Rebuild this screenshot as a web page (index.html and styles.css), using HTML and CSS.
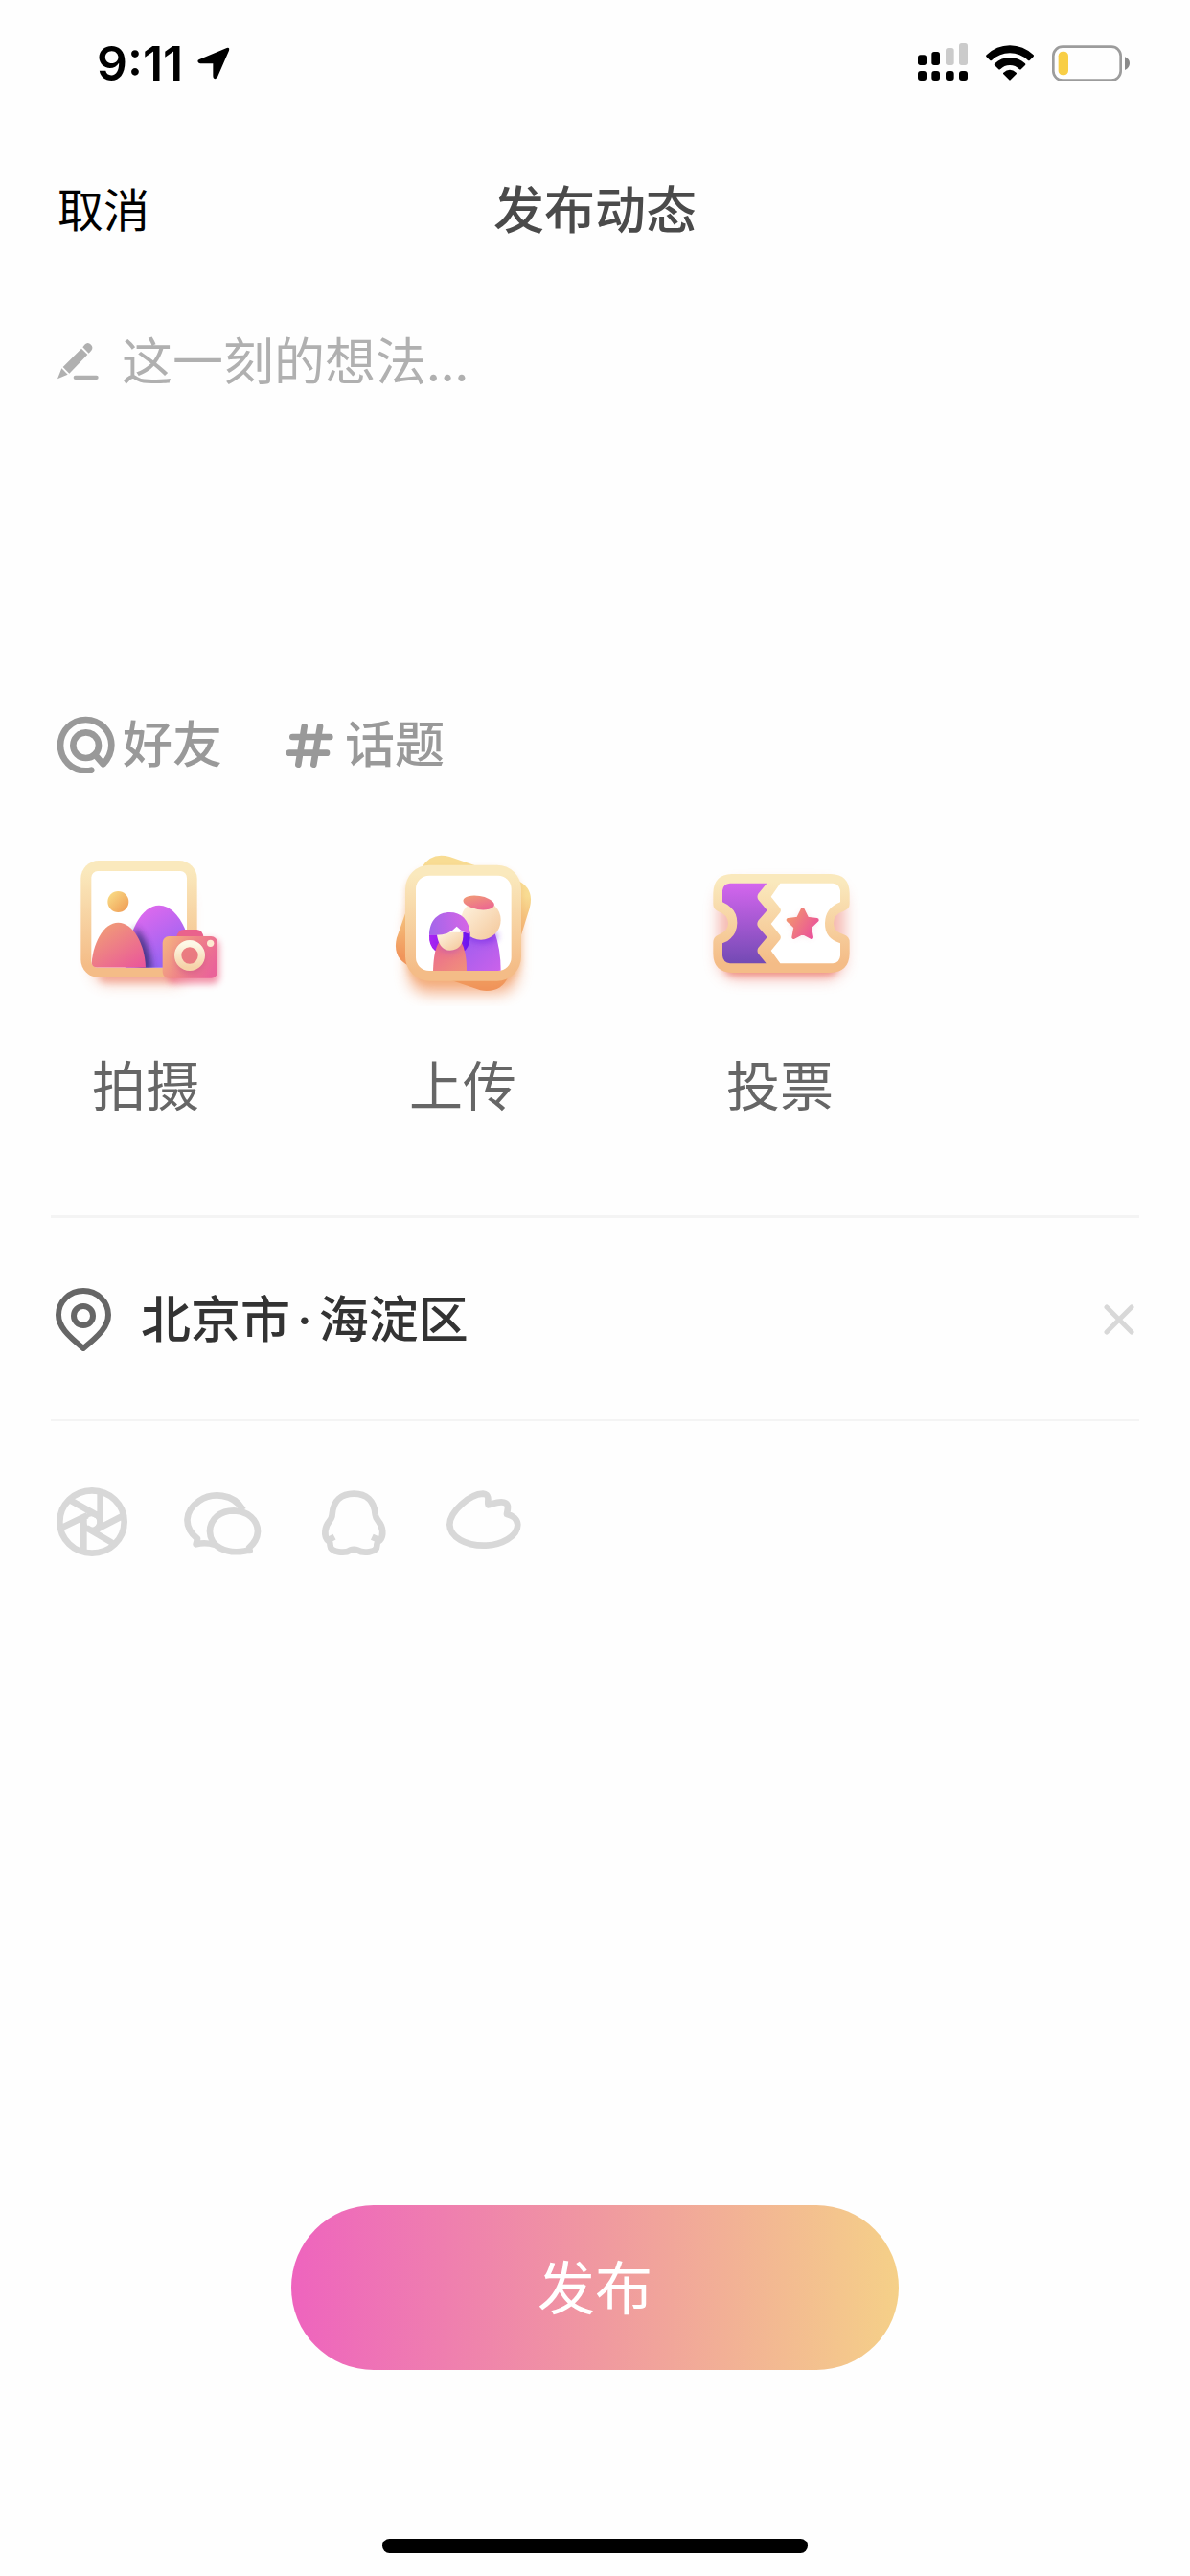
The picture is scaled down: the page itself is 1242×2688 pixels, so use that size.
FILE: index.html
```html
<!DOCTYPE html>
<html lang="zh-CN">
<head>
<meta charset="utf-8">
<meta name="viewport" content="width=device-width, initial-scale=1">
<title>发布动态</title>
<link rel="stylesheet" href="styles.css">
</head>
<body>
<div class="page">
  <div class="status">
    <span class="status-time">9:11</span>
    <svg class="status-arrow" viewBox="500 75 102 126" aria-hidden="true"><path d="M506 126 592 90Q602 87 599 98L563 181Q559 188 553 186 549 184 549 178V139H509Q502 138 501 132 501 128 506 126Z"/></svg>
    <div class="status-icons">
      <svg class="signal" viewBox="174 75 156 126" aria-hidden="true">
        <g fill="#000"><rect x="174" y="112" width="27" height="32" rx="8"/><rect x="217" y="102" width="26" height="42" rx="8"/><rect x="174" y="162" width="27" height="30" rx="9"/><rect x="217" y="162" width="26" height="30" rx="9"/><rect x="261" y="162" width="26" height="30" rx="9"/><rect x="303" y="162" width="27" height="30" rx="9"/></g>
        <g fill="#cbcbcb"><rect x="261" y="90" width="26" height="54" rx="8"/><rect x="303" y="75" width="27" height="69" rx="8"/></g>
      </svg>
      <svg class="wifi" viewBox="387 75 150 126" aria-hidden="true"><path d="M389 112Q420 82 462 82T536 112Q538 114 536 117L524 129Q522 131 519 129 494 106 462 106T405 129Q402 131 400 129L388 117Q386 114 389 112ZM415 139Q435 120 462 120T510 139Q512 142 510 144L497 157Q495 158 492 157 480 144 462 144T432 157Q429 158 427 157L414 144Q412 142 415 139ZM442 167Q462 150 482 167 484 169 482 172L464 190Q462 192 460 190L442 172Q440 169 442 167Z"/></svg>
      <svg class="battery" viewBox="594 75 243 126" aria-hidden="true"><rect x="598" y="86" width="211" height="105" rx="29" fill="none" stroke="#9c9c9c" stroke-width="8"/><rect x="614" y="101" width="31" height="74" rx="14" fill="#f8ce46"/><path d="M822 118Q837 124 837 138T822 159Z" fill="#8a8a8a"/></svg>
    </div>
  </div>

  <header class="header">
    <button class="cancel" type="button">取消</button>
    <h1 class="title">发布动态</h1>
  </header>

  <main class="main">
    <div class="editor">
      <svg class="pencil" viewBox="60 42 129 180" aria-hidden="true"><path d="M135 101 154 120 97 179 77 159ZM139 97 145 89Q155 79 165 89 173 98 166 107L158 116ZM73 163 92 182 60 196Z"/><rect x="110" y="185" width="78" height="13" rx="6"/></svg>
      <textarea class="thought" aria-label="这一刻的想法" placeholder="这一刻的想法..."></textarea>
    </div>

    <div class="tags">
      <button class="tag tag-friend" type="button">
        <svg class="tag-icon at" viewBox="60 63 180 198" aria-hidden="true"><circle cx="149" cy="173" r="40"/><path d="M177 202 203 232Q229 206 229 172A80 80 0 1 0 149 253Q158 253 166 251" stroke-linecap="round" stroke-linejoin="round"/></svg>
        好友
      </button>
      <button class="tag tag-topic" type="button">
        <svg class="tag-icon hash" viewBox="774 63 150 198" aria-hidden="true"><path d="M796 147H913M786 197H903M833 115 814 233M882 115 862 233" stroke-linecap="round"/></svg>
        话题
      </button>
    </div>

    <div class="tools">
      <button class="tool" type="button">
        <svg class="tool-icon" viewBox="-9 0 570 540" aria-hidden="true">
          <defs>
            <linearGradient id="frame" x1="0" y1="0" x2="0" y2="1"><stop offset=".08" stop-color="#fae9bd"/><stop offset=".9" stop-color="#f4bc87"/></linearGradient>
            <linearGradient id="sun" x1="0" y1="0" x2="1" y2="1"><stop stop-color="#fae28a"/><stop offset="1" stop-color="#ef9852"/></linearGradient>
            <linearGradient id="hill" x1=".1" y1="0" x2=".9" y2="1"><stop stop-color="#f1a274"/><stop offset="1" stop-color="#ea579a"/></linearGradient>
            <linearGradient id="violet" x1=".2" y1="0" x2=".8" y2="1"><stop stop-color="#e46aed"/><stop offset="1" stop-color="#8562f4"/></linearGradient>
            <linearGradient id="cam" x1="0" y1=".2" x2="1" y2=".6"><stop stop-color="#f4b181"/><stop offset=".5" stop-color="#ef8488"/><stop offset="1" stop-color="#ea6399"/></linearGradient>
            <linearGradient id="ring" x1="0" y1="0" x2="0" y2="1"><stop stop-color="#fdf8e7"/><stop offset="1" stop-color="#f6d3a8"/></linearGradient>
            <filter id="soft" x="-40%" y="-40%" width="180%" height="180%"><feGaussianBlur stdDeviation="22"/></filter>
            <filter id="softer" x="-40%" y="-60%" width="180%" height="220%"><feGaussianBlur stdDeviation="11"/></filter>
            <clipPath id="photo"><rect x="106" y="117" width="299" height="302" rx="18"/></clipPath>
          </defs>
          <rect x="110" y="170" width="300" height="300" rx="50" fill="#ee8460" opacity=".45" filter="url(#soft)"/>
          <rect x="130" y="420" width="240" height="46" rx="20" fill="#ee8a76" opacity=".55" filter="url(#softer)"/>
          <rect x="346" y="330" width="160" height="140" rx="20" fill="#ec5d7e" opacity=".65" filter="url(#softer)"/>
          <rect x="73" y="84" width="364" height="366" rx="56" fill="url(#frame)"/>
          <rect x="106" y="117" width="299" height="302" rx="20" fill="#fff"/>
          <g clip-path="url(#photo)">
            <path d="M212 430C216 310 262 224 318 224S422 310 426 430Z" fill="url(#violet)"/>
            <path d="M240 290Q290 330 296 430H255Z" fill="#312a70" opacity=".8" filter="url(#softer)"/>
            <path d="M106 419C108 344 144 278 190 278S274 344 276 419Z" fill="url(#hill)"/>
          </g>
          <circle cx="190" cy="213" r="33" fill="url(#sun)"/>
          <path d="M372 326Q376 300 398 300H436Q455 301 458 326Z" fill="#ea628c"/>
          <rect x="329" y="321" width="172" height="131" rx="20" fill="url(#cam)"/>
          <circle cx="416" cy="394" r="44" fill="#bd4784" opacity=".45" filter="url(#softer)"/>
          <circle cx="414" cy="381" r="37" fill="#ed8080" fill-opacity=".8" stroke="url(#ring)" stroke-width="22"/>
          <circle cx="479" cy="343" r="11" fill="#fdebd2"/>
        </svg>
        拍摄
      </button>
      <button class="tool" type="button">
        <svg class="tool-icon" viewBox="-6 0 570 540" aria-hidden="true">
          <defs>
            <linearGradient id="back" x1="0" y1="0" x2="0" y2="1"><stop offset=".3" stop-color="#f8dc93"/><stop offset=".75" stop-color="#f0935a"/></linearGradient>
            <linearGradient id="hair" x1="0" y1=".5" x2="1" y2=".4"><stop stop-color="#a366ea"/><stop offset="1" stop-color="#d765e6"/></linearGradient>
            <linearGradient id="lock" x1="0" y1="0" x2="1" y2="0"><stop stop-color="#aa25f2"/><stop offset="1" stop-color="#6a14ef"/></linearGradient>
            <linearGradient id="face" x1=".1" y1=".1" x2=".9" y2=".9"><stop stop-color="#fdf1dc"/><stop offset="1" stop-color="#f5cba0"/></linearGradient>
            <linearGradient id="dress" x1="0" y1="0" x2=".8" y2="1"><stop stop-color="#ea6691"/><stop offset="1" stop-color="#f08d7c"/></linearGradient>
            <linearGradient id="coat" x1="0" y1="0" x2="1" y2="1"><stop stop-color="#985cf0"/><stop offset="1" stop-color="#cb62ea"/></linearGradient>
            <linearGradient id="cap" x1="0" y1="0" x2="1" y2="1"><stop stop-color="#f1a273"/><stop offset="1" stop-color="#eb5b98"/></linearGradient>
            <clipPath id="portrait"><rect x="132" y="131" width="299" height="298" rx="42"/></clipPath>
          </defs>
          <rect x="110" y="220" width="340" height="280" rx="60" fill="#f08a50" opacity=".65" filter="url(#soft)"/>
          <path d="M150 106Q180 56 238 72L446 144Q506 170 488 234L420 450Q398 500 334 490L122 418Q56 394 72 326Z" fill="url(#back)"/>
          <rect x="99" y="110" width="363" height="362" rx="80" fill="#f2a663" opacity=".45" filter="url(#softer)"/>
          <rect x="99" y="98" width="363" height="363" rx="76" fill="url(#frame)"/>
          <rect x="132" y="131" width="299" height="298" rx="42" fill="#fff"/>
          <g clip-path="url(#portrait)">
            <path d="M270 430Q280 310 334 306H378Q398 360 398 430Z" fill="url(#coat)"/>
            <ellipse cx="342" cy="322" rx="46" ry="20" fill="#7a2be6" opacity=".65" filter="url(#softer)"/>
            <circle cx="336" cy="270" r="62" fill="url(#face)"/>
            <path d="M174 316H212V360Q200 370 192 366 172 350 174 316ZM302 308H270V362Q280 372 288 364 304 346 302 308Z" fill="url(#lock)"/>
            <path d="M186 430Q188 360 206 338H274Q292 370 291 430Z" fill="url(#dress)"/>
            <ellipse cx="240" cy="350" rx="32" ry="22" fill="#b04dbb" opacity=".5" filter="url(#softer)"/>
            <path d="M197 308H280Q284 362 239 365 202 364 197 308Z" fill="url(#face)"/>
            <path d="M174 320C174 270 202 246 238 246S300 270 302 314Q280 310 260 290 230 324 174 316Z" fill="url(#hair)"/>
          </g>
          <ellipse cx="329" cy="216" rx="49" ry="21" transform="rotate(9 329 216)" fill="url(#cap)"/>
        </svg>
        上传
      </button>
      <button class="tool" type="button">
        <svg class="tool-icon" viewBox="-3 0 570 540" aria-hidden="true">
          <defs>
            <linearGradient id="stub" x1="0" y1="0" x2="0" y2="1"><stop stop-color="#d466ee"/><stop offset="1" stop-color="#734ab4"/></linearGradient>
            <linearGradient id="star" x1="0" y1=".2" x2="1" y2=".8"><stop stop-color="#f2946f"/><stop offset="1" stop-color="#ea509b"/></linearGradient>
          </defs>
          <rect x="90" y="160" width="394" height="294" rx="60" fill="#ec7262" opacity=".5" filter="url(#soft)"/>
          <rect x="110" y="396" width="350" height="48" rx="24" fill="#eb6f62" opacity=".6" filter="url(#softer)"/>
          <path d="M131 126H441Q500 128 500 186V220Q500 236 482 242 450 252 450 280T482 316Q500 322 500 340V376Q498 433 441 435H131Q74 433 73 376V340Q73 324 88 317 120 306 120 280T88 243Q73 236 73 220V186Q74 128 131 126Z" fill="url(#frame)"/>
          <path d="M126 155H241L214 188Q209 197 214 206L242 240 214 272Q208 282 214 292L242 324 214 357Q209 366 214 375L239 406H126Q104 404 102 382V343Q147 326 148 280T102 214V178Q104 157 126 155Z" fill="url(#stub)"/>
          <path d="M283 155H448Q469 158 471 178V214Q424 232 423 280T471 343V382Q469 404 448 406H283L254 366 283 331Q287 325 283 318L254 282 283 246Q287 240 283 233L254 197Z" fill="#fff"/>
          <path d="M353 240 366 268 398 272 375 294 381 326 353 311 325 326 331 294 308 272 340 268Z" fill="#d98aa8" opacity=".4" filter="url(#softer)"/>
          <path d="M353 237 367 266 398 270 375 292 381 324 353 309 325 324 331 292 308 270 339 266Z" fill="url(#star)" stroke="url(#star)" stroke-width="12" stroke-linejoin="round"/>
        </svg>
        投票
      </button>
    </div>

    <div class="place">
      <svg class="pin" viewBox="0 0 58 72" aria-hidden="true"><path d="M29 69C12 55 3 46 3 34A26 25 0 0 1 55 34C55 46 46 55 29 69Z"/><circle cx="29" cy="35" r="10"/></svg>
      <span class="place-name">北京市<span class="dot">·</span>海淀区</span>
      <button class="clear" type="button" aria-label="清除位置"><svg class="cross" viewBox="0 0 32 38" aria-hidden="true"><path d="M3 9 29 35M29 9 3 35"/></svg></button>
    </div>

    <div class="share">
      <button class="share-item" type="button" aria-label="朋友圈"><svg class="w74" viewBox="57 67 222 216" aria-hidden="true"><ellipse cx="168" cy="175" rx="101" ry="98"/><circle cx="167" cy="175" r="24" stroke-width="14"/><path d="M194 83V186M98 106 183 154M75 192 153 155M142 267V168M237 244 152 194M263 157 182 199"/></svg></button>
      <button class="share-item" type="button" aria-label="微信"><svg class="w82" viewBox="453 67 246 216" aria-hidden="true"><path d="M641 138C612 84 542 83 504 109 456 142 454 192 498 228L494 245Q520 238 552 246" stroke-linejoin="round"/><path d="M653 265C586 279 538 251 537 205 538 164 572 140 612 140 655 141 687 168 687 205 686 228 676 242 660 256L662 265Z" stroke-linejoin="round"/></svg></button>
      <button class="share-item" type="button" aria-label="QQ"><svg class="w76" viewBox="873 67 228 216" aria-hidden="true"><path d="M905 232C894 218 896 191 911 173Q920 162 920 152C923 108 950 87 988 87S1052 108 1055 152Q1056 162 1065 173C1080 191 1082 218 1070 232" stroke-linecap="round"/><path d="M906 233 927 222M1069 233 1045 222"/><path d="M909 234Q914 240 914 250C916 272 962 274 976 264Q988 259 1000 264C1016 274 1060 272 1060 250Q1060 240 1066 234" stroke-linecap="round"/></svg></button>
      <button class="share-item" type="button" aria-label="微博"><svg class="w80" viewBox="1275 67 240 216" aria-hidden="true"><path d="M1409 122C1404 112 1418 90 1392 87 1352 88 1288 142 1288 184 1289 224 1340 249 1394 249 1450 249 1501 220 1501 184 1500 168 1486 155 1467 151 1469 136 1476 119 1458 114 1442 110 1427 117 1409 122Z" stroke-linejoin="round"/></svg></button>
    </div>
  </main>

  <footer class="footer">
    <button class="publish" type="submit">发布</button>
    <div class="home-bar"></div>
  </footer>
</div>
</body>
</html>
```
FILE: styles.css
```css
* {
  box-sizing: border-box;
}

body {
  margin: 0;
  background: #fefefe;
  color: #333;
  font-family: "Noto Sans CJK SC", "Noto Sans", sans-serif;
  font-size: 53px;
  line-height: 60px;
}

button,
textarea {
  margin: 0;
  padding: 0;
  border: 0;
  background: none;
  color: inherit;
  font: inherit;
}

svg {
  display: block;
  flex: none;
}

.page {
  display: flex;
  flex-direction: column;
  min-height: 100vh;
}

/* Status bar */
.status {
  display: flex;
  align-items: center;
  padding: 45px 63px 0 101px;
}

.status-time {
  color: #000;
  font-family: Inter, sans-serif;
  font-size: 50px;
  font-weight: 600;
  line-height: 42px;
}

.status-arrow {
  width: 34px;
  height: 42px;
  margin-left: 15px;
}

.status-icons {
  display: flex;
  gap: 19px;
  margin-left: auto;
}

.signal {
  width: 52px;
  height: 42px;
}

.wifi {
  width: 50px;
  height: 42px;
}

.battery {
  width: 81px;
  height: 42px;
}

/* Title row */
.header {
  display: grid;
  grid-template-columns: 1fr auto 1fr;
  align-items: center;
  margin-top: 99px;
  padding: 0 60px;
}

.cancel {
  justify-self: start;
  color: #000;
  font-size: 48px;
}

.title {
  margin: 0;
  color: #4a4a4a;
  font-size: 53px;
  font-weight: 500;
}

/* Text entry */
.editor {
  display: flex;
  gap: 24px;
  margin-top: 98px;
  padding: 0 60px;
}

.pencil {
  width: 43px;
  height: 60px;
  fill: #b0b0b0;
}

.thought {
  flex: 1;
  min-width: 0;
  height: 340px;
  outline: none;
  resize: none;
}

.thought::placeholder {
  color: #b0b0b0;
  opacity: 1;
}

.tags {
  display: flex;
  gap: 66px;
  margin-top: 57px;
  padding: 0 60px;
}

.tag {
  display: flex;
  align-items: center;
  color: #999;
  font-size: 52px;
  font-weight: 500;
}

.tag-friend {
  gap: 8px;
}

.tag-topic {
  gap: 12px;
}

.tag-icon {
  height: 66px;
  fill: none;
  stroke: #999;
  stroke-width: 20;
}

.at {
  width: 60px;
}

.hash {
  width: 50px;
}

/* Photo, upload and vote */
.tools {
  display: flex;
  gap: 141px;
  margin-top: 63px;
  padding: 0 57px;
}

.tool {
  display: flex;
  flex-direction: column;
  align-items: center;
  gap: 50px;
  color: #666;
  font-size: 56px;
}

.tool-icon {
  width: 190px;
  height: 180px;
}

/* Location */
.place {
  display: flex;
  align-items: center;
  margin: 108px 53px 0;
  padding: 67px 5px 71px;
  border-top: 3px solid #f4f4f4;
  border-bottom: 2px solid #f4f4f4;
}

.pin {
  width: 58px;
  height: 72px;
  margin-right: 31px;
  fill: none;
  stroke: #666;
  stroke-width: 6;
}

.place-name {
  font-size: 52px;
  font-weight: 500;
}

.dot {
  padding: 0 7px;
  font-family: Inter, sans-serif;
  line-height: 1px;
}

.clear {
  margin-left: auto;
}

.cross {
  width: 32px;
  height: 38px;
  fill: none;
  stroke: #d8d8d8;
  stroke-width: 5;
  stroke-linecap: round;
}

/* Share targets */
.share {
  display: flex;
  gap: 58px;
  padding: 69px 59px;
}

.share-item svg {
  height: 72px;
  fill: none;
  stroke: #d8d8d8;
  stroke-width: 20;
}

.w74 {
  width: 74px;
}

.w76 {
  width: 76px;
}

.w80 {
  width: 80px;
}

.w82 {
  width: 82px;
}

/* Publish */
.footer {
  display: flex;
  flex-direction: column;
  align-items: center;
  gap: 176px;
  margin-top: auto;
  padding-bottom: 24px;
}

.publish {
  width: 51%;
  height: 172px;
  padding-bottom: 6px;
  border-radius: 86px;
  background: linear-gradient(90deg, #ee64be, #f09a9f 52%, #f5d088);
  color: #fff;
  font-size: 60px;
}

.home-bar {
  width: 444px;
  height: 15px;
  border-radius: 8px;
  background: #000;
}
```
